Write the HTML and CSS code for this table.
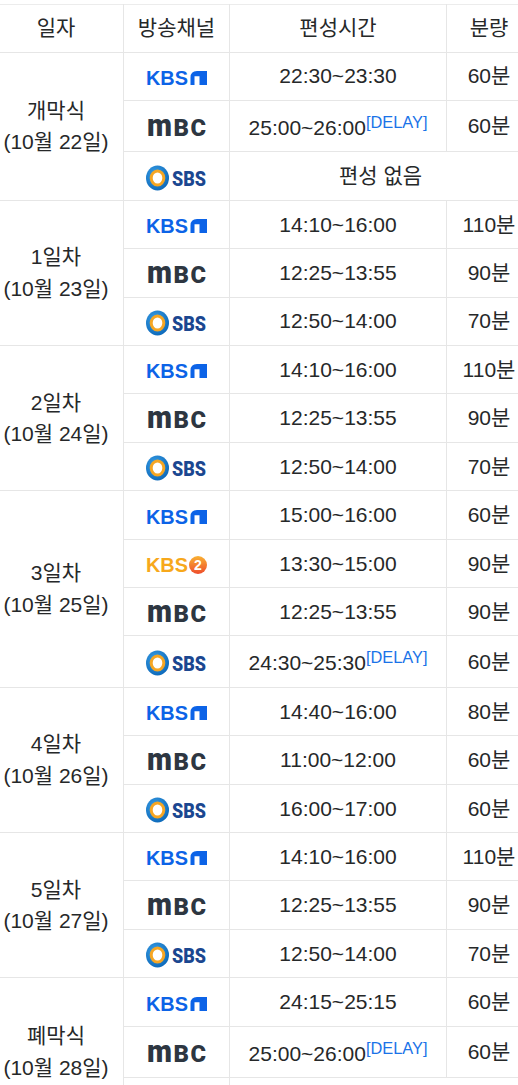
FILE: index.html
```html
<!DOCTYPE html>
<html lang="ko">
<head>
<meta charset="utf-8">
<title>편성표</title>
<link rel="stylesheet" href="styles.css">
</head>
<body>
<svg class="defs" width="0" height="0" aria-hidden="true">
  <defs>
    <linearGradient id="k2g" x1="0" y1="0" x2="0" y2="1">
      <stop offset="0" stop-color="#f9b233"/>
      <stop offset="1" stop-color="#ee4c2c"/>
    </linearGradient>
    <radialGradient id="sbsb" cx="0.4" cy="0.35" r="0.7">
      <stop offset="0" stop-color="#3aa0e8"/>
      <stop offset="1" stop-color="#0b67b8"/>
    </radialGradient>
    <symbol id="kbs1" viewBox="0 0 62 16">
      <text x="0" y="14.6" class="kbs-t" textLength="42" lengthAdjust="spacingAndGlyphs" fill="#0c63e7">KBS</text>
      <path d="M44.5 15 V7.5 Q44.5 1 51 1 H61 V15 H53.5 V6.2 H48.5 V15 Z" fill="#0c63e7"/>
    </symbol>
    <symbol id="kbs2" viewBox="0 0 62 20">
      <text x="0" y="16.8" class="kbs-t" textLength="42" lengthAdjust="spacingAndGlyphs" fill="#f7a81b">KBS</text>
      <circle cx="52" cy="10" r="9" fill="url(#k2g)"/>
      <text x="52" y="15" class="k2-t" text-anchor="middle" fill="#fff">2</text>
    </symbol>
    <symbol id="mbc" viewBox="0 0 60 19">
      <text class="mbc-t" transform="translate(0,18) scale(1,1.34)" x="0" y="0" textLength="25" lengthAdjust="spacingAndGlyphs" fill="#2d3641">m</text>
      <text class="mbc-t" x="26.5" y="18" textLength="15.5" lengthAdjust="spacingAndGlyphs" fill="#2d3641">B</text>
      <text class="mbc-t" x="43.5" y="18" textLength="15.5" lengthAdjust="spacingAndGlyphs" fill="#2d3641">C</text>
    </symbol>
    <symbol id="sbs" viewBox="0 0 62 26">
      <ellipse cx="11.5" cy="13" rx="11.5" ry="12.5" fill="url(#sbsb)"/>
      <ellipse cx="11.5" cy="13" rx="7.8" ry="8.6" fill="#f6a623"/>
      <ellipse cx="11.5" cy="13" rx="4.8" ry="5.6" fill="#fff"/>
      <text x="26" y="20.5" class="sbs-t" textLength="34" lengthAdjust="spacingAndGlyphs" fill="#1b4790">SBS</text>
    </symbol>
  </defs>
</svg>

<div class="wrap">
<table class="sched">
  <colgroup>
    <col class="c-date"><col class="c-ch"><col class="c-time"><col class="c-len">
  </colgroup>
  <thead>
    <tr><th>일자</th><th>방송채널</th><th>편성시간</th><th>분량</th></tr>
  </thead>
  <tbody>
    <tr>
      <td rowspan="3">개막식<br>(10월 22일)</td>
      <td><svg class="logo kb"><use href="#kbs1"/></svg></td>
      <td>22:30~23:30</td><td>60분</td>
    </tr>
    <tr>
      <td><svg class="logo mb"><use href="#mbc"/></svg></td>
      <td>25:00~26:00<sup class="delay">[DELAY]</sup></td><td>60분</td>
    </tr>
    <tr>
      <td><svg class="logo sb"><use href="#sbs"/></svg></td>
      <td colspan="2">편성 없음</td>
    </tr>

    <tr>
      <td rowspan="3">1일차<br>(10월 23일)</td>
      <td><svg class="logo kb"><use href="#kbs1"/></svg></td>
      <td>14:10~16:00</td><td>110분</td>
    </tr>
    <tr>
      <td><svg class="logo mb"><use href="#mbc"/></svg></td>
      <td>12:25~13:55</td><td>90분</td>
    </tr>
    <tr>
      <td><svg class="logo sb"><use href="#sbs"/></svg></td>
      <td>12:50~14:00</td><td>70분</td>
    </tr>

    <tr>
      <td rowspan="3">2일차<br>(10월 24일)</td>
      <td><svg class="logo kb"><use href="#kbs1"/></svg></td>
      <td>14:10~16:00</td><td>110분</td>
    </tr>
    <tr>
      <td><svg class="logo mb"><use href="#mbc"/></svg></td>
      <td>12:25~13:55</td><td>90분</td>
    </tr>
    <tr>
      <td><svg class="logo sb"><use href="#sbs"/></svg></td>
      <td>12:50~14:00</td><td>70분</td>
    </tr>

    <tr>
      <td rowspan="4">3일차<br>(10월 25일)</td>
      <td><svg class="logo kb"><use href="#kbs1"/></svg></td>
      <td>15:00~16:00</td><td>60분</td>
    </tr>
    <tr>
      <td><svg class="logo k2"><use href="#kbs2"/></svg></td>
      <td>13:30~15:00</td><td>90분</td>
    </tr>
    <tr>
      <td><svg class="logo mb"><use href="#mbc"/></svg></td>
      <td>12:25~13:55</td><td>90분</td>
    </tr>
    <tr>
      <td><svg class="logo sb"><use href="#sbs"/></svg></td>
      <td>24:30~25:30<sup class="delay">[DELAY]</sup></td><td>60분</td>
    </tr>

    <tr>
      <td rowspan="3">4일차<br>(10월 26일)</td>
      <td><svg class="logo kb"><use href="#kbs1"/></svg></td>
      <td>14:40~16:00</td><td>80분</td>
    </tr>
    <tr>
      <td><svg class="logo mb"><use href="#mbc"/></svg></td>
      <td>11:00~12:00</td><td>60분</td>
    </tr>
    <tr>
      <td><svg class="logo sb"><use href="#sbs"/></svg></td>
      <td>16:00~17:00</td><td>60분</td>
    </tr>

    <tr>
      <td rowspan="3">5일차<br>(10월 27일)</td>
      <td><svg class="logo kb"><use href="#kbs1"/></svg></td>
      <td>14:10~16:00</td><td>110분</td>
    </tr>
    <tr>
      <td><svg class="logo mb"><use href="#mbc"/></svg></td>
      <td>12:25~13:55</td><td>90분</td>
    </tr>
    <tr>
      <td><svg class="logo sb"><use href="#sbs"/></svg></td>
      <td>12:50~14:00</td><td>70분</td>
    </tr>

    <tr>
      <td rowspan="3">폐막식<br>(10월 28일)</td>
      <td><svg class="logo kb"><use href="#kbs1"/></svg></td>
      <td>24:15~25:15</td><td>60분</td>
    </tr>
    <tr>
      <td><svg class="logo mb"><use href="#mbc"/></svg></td>
      <td>25:00~26:00<sup class="delay">[DELAY]</sup></td><td>60분</td>
    </tr>
    <tr>
      <td><svg class="logo sb"><use href="#sbs"/></svg></td>
      <td colspan="2">편성 없음</td>
    </tr>
  </tbody>
</table>
</div>
</body>
</html>
```

FILE: styles.css
```css
html, body {
  margin: 0;
  padding: 0;
  background: #fff;
}
body {
  overflow: hidden;
  font-family: "Liberation Sans", "Noto Sans CJK KR", sans-serif;
  font-size: 21px;
  color: #262829;
}
.defs {
  position: absolute;
  width: 0;
  height: 0;
  overflow: hidden;
}
.wrap {
  margin: 4px 0 0 -12px;
  width: 543px;
}
.sched {
  border-collapse: collapse;
  table-layout: fixed;
  width: 543px;
}
.c-date { width: 135px; }
.c-ch { width: 106px; }
.c-time { width: 217px; }
.c-len { width: 85px; }
.sched th,
.sched td {
  border: 1px solid #e6e6e6;
  padding: 7.96px 4px;
  text-align: center;
  vertical-align: middle;
  line-height: 1.5;
  font-weight: normal;
  white-space: nowrap;
}
.sched thead th {
  border-top: 1px solid #ececec;
  padding: 7px 4px 8px;
}
.delay {
  color: #1a73e8;
  font-size: 0.78em;
  line-height: 26px;
  vertical-align: 7px;
}
.logo {
  display: inline-block;
  vertical-align: middle;
}
.logo.kb { width: 62px; height: 16px; margin-left: 1px; }
.logo.k2 { width: 62px; height: 20px; margin-left: 1px; }
.logo.mb { width: 60px; height: 19px; }
.logo.sb { width: 62px; height: 26px; margin-left: 1px; }
.kbs-t {
  font-family: "Liberation Sans", sans-serif;
  font-weight: bold;
  font-size: 20px;
}
.k2-t {
  font-family: "Liberation Sans", sans-serif;
  font-weight: bold;
  font-size: 14px;
}
.mbc-t {
  font-family: Roboto, "Liberation Sans", sans-serif;
  font-weight: 900;
  font-size: 24px;
}
.sbs-t {
  font-family: Roboto, "Liberation Sans", sans-serif;
  font-weight: 900;
  font-size: 21px;
}
```
